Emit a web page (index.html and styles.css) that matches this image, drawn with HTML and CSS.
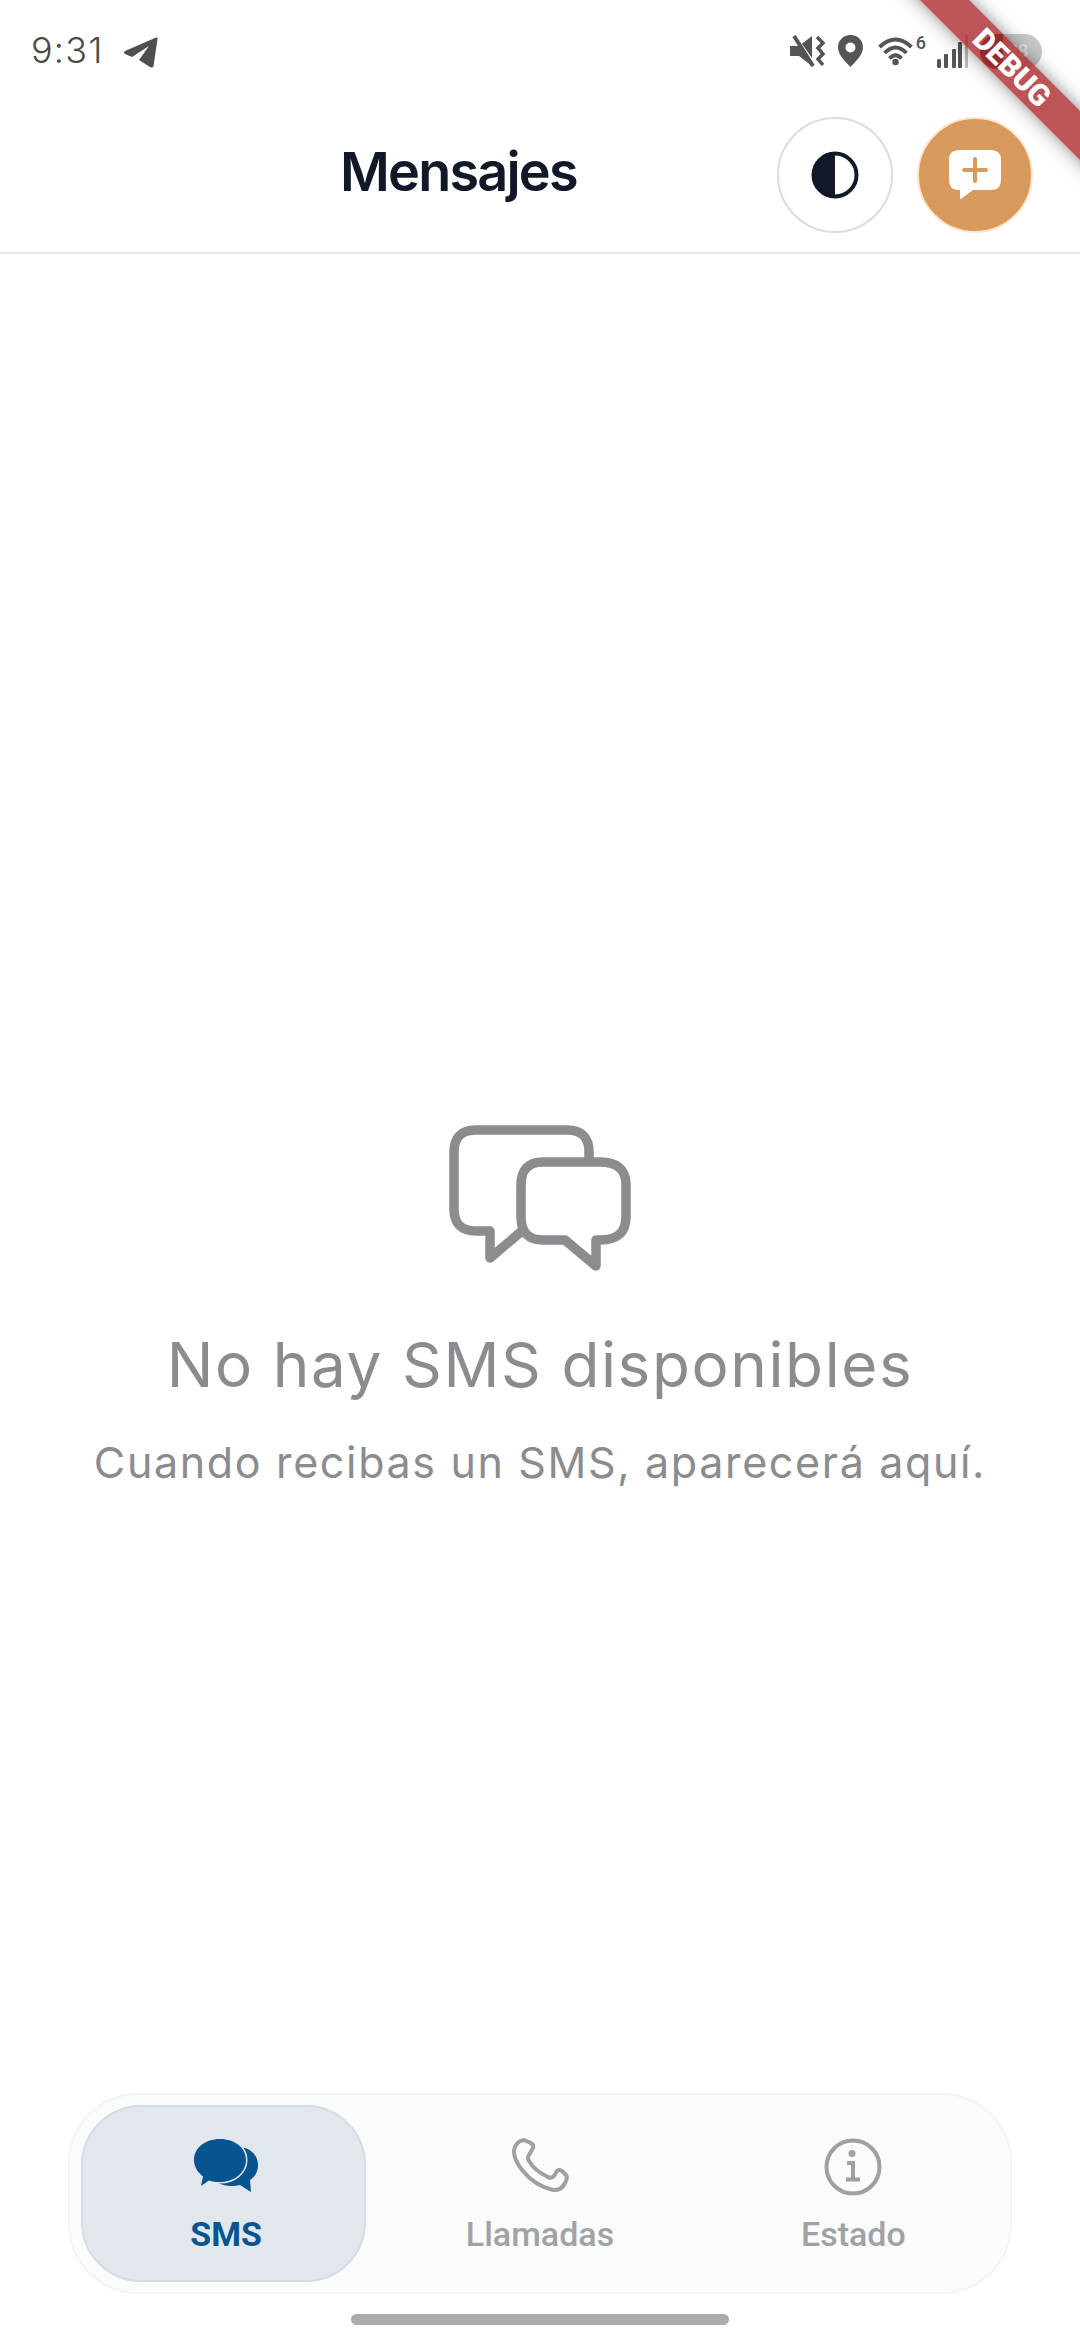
FILE: index.html
```html
<!DOCTYPE html>
<html>
<head>
    <meta charset="UTF-8">
    <title>Mensajes</title>
    <link rel="stylesheet" href="styles.css">
</head>
<body>
    <div class="screen">
        <div class="status-bar">
            <div class="status-left">
                <span class="clock">9:31</span>
                <svg class="tg-icon" width="34" height="31" viewBox="0 0 34 31">
                    <path fill="#4f4f4f" d="M1 14 L32 0.500 Q34 0 33.500 2 L29.500 29 Q29 31.500 26 30 L15 23 L25 9 L8 20 L1 17 Q-1 15.500 1 14Z"/>
                </svg>
            </div>
            <div class="status-right">
                <svg class="mute" width="35" height="32" viewBox="0 0 35 32">
                    <path fill="#555" d="M0 11 H9 L22 1 V31 L9 21 H0Z"/>
                    <path d="M2 -2 L25 31" stroke="#fff" stroke-width="4"/>
                    <path d="M4 1 L23 31" stroke="#555" stroke-width="4"/>
                    <path d="M27 2 L33 8 L28 13 L33 19 L28 24 L33 30" fill="none" stroke="#555" stroke-width="3.500"/>
                </svg>
                <svg class="pin" width="25" height="32" viewBox="0 0 25 32">
                    <path fill="#555" fill-rule="evenodd" d="M12.500 0 C5 0 0 5.500 0 12.500 C0 20 8 27 12.500 32 C17 27 25 20 25 12.500 C25 5.500 20 0 12.500 0Z M12.500 7.500 A5 5 0 1 1 12.400 7.500Z"/>
                </svg>
                <svg class="wifi" width="35" height="32" viewBox="0 0 35 32">
                    <g fill="none" stroke="#555" stroke-width="3.800">
                        <path d="M1.500 12 Q17.500 -3 33.500 12"/>
                        <path d="M6.500 18 Q17.500 7 28.500 18"/>
                        <path d="M11.500 23.500 Q17.500 17 23.500 23.500"/>
                    </g>
                    <circle cx="17.500" cy="27" r="3.200" fill="#555"/>
                </svg>
                <span class="wifi-six">6</span>
                <svg class="signal" width="31" height="34" viewBox="0 0 31 34">
                    <rect x="0" y="25" width="4" height="9" rx="1.500" fill="#555"/>
                    <rect x="7" y="20" width="4" height="14" rx="1" fill="#555"/>
                    <rect x="15" y="15" width="4" height="19" rx="1" fill="#555"/>
                    <rect x="21" y="8" width="4" height="26" rx="1" fill="#555"/>
                    <rect x="28" y="1" width="3" height="33" rx="1" fill="#bbb"/>
                </svg>
                <div class="battery">
                    <div class="battery-level"></div>
                    <span class="battery-text">88</span>
                </div>
            </div>
        </div>

        <header class="app-bar">
            <h1 class="app-title">Mensajes</h1>
            <div class="app-actions">
                <button class="round-btn theme-btn">
                    <svg width="48" height="48" viewBox="0 0 48 48">
                        <circle cx="24" cy="24" r="21.500" fill="none" stroke="#111827" stroke-width="4"/>
                        <path fill="#111827" d="M24 2 A22 22 0 0 0 24 46Z"/>
                    </svg>
                </button>
                <button class="round-btn new-btn">
                    <svg width="52" height="50" viewBox="0 0 52 50">
                        <path fill="#fff" d="M10 0 H42 Q52 0 52 10 V30 Q52 40 42 40 H24 L12 49 Q11 50 11 48 V40 H10 Q0 40 0 30 V10 Q0 0 10 0Z"/>
                        <path d="M26 9 V31 M15 20 H37" stroke="#d89a5c" stroke-width="4" stroke-linecap="round"/>
                    </svg>
                </button>
            </div>
        </header>

        <main class="empty">
            <svg class="empty-icon" width="182" height="146" viewBox="0 0 182 146">
                <g fill="none" stroke="#8a8c90" stroke-width="9.500" stroke-linejoin="round" stroke-linecap="round">
                    <path d="M140 36 V27 Q140 5 118 5 H27 Q5 5 5 27 V84 Q5 106 27 106 H41 V133 L73 106"/>
                    <path d="M94 37 H151 Q177 37 177 60 V92 Q177 115 151 115 H147 V141 L116 115 H94 Q72 115 72 92 V60 Q72 37 94 37Z"/>
                </g>
            </svg>
            <h2 class="empty-title">No hay SMS disponibles</h2>
            <p class="empty-text">Cuando recibas un SMS, aparecerá aquí.</p>
        </main>

        <nav class="tab-bar">
            <div class="tab tab-active">
                <svg width="64" height="58" viewBox="0 -1 64 58">
                    <path fill="#07548f" d="M44 8 C56 8 64 16 64 26 C64 33 61 38 56 41 L57 53 L46 46 C38 48 30 47 24 44Z"/>
                    <path fill="#07548f" stroke="#e1e7ed" stroke-width="3" paint-order="stroke" d="M26 0 C41 0 52 9 52 21 C52 33 41 43 26 43 C22 43 18 42.500 15 41.500 L7 47 L9 37.500 C3 33 0 27 0 21 C0 9 11 0 26 0Z"/>
                </svg>
                <span class="tab-label">SMS</span>
            </div>
            <div class="tab">
                <svg width="58" height="58" viewBox="0 0 58 58">
                    <path fill="none" stroke="#9ea0a3" stroke-width="4" stroke-linejoin="round" d="M13 2 L20 5 Q23 7 22 10 L18 17 Q16 20 18 23 Q24 33 37 39 Q40 41 43 38 L46 33 Q48 31 51 33 L55 37 Q57 40 54 45 Q50 53 42 52 Q24 48 11 32 Q2 20 3 12 Q5 3 13 2Z"/>
                </svg>
                <span class="tab-label">Llamadas</span>
            </div>
            <div class="tab">
                <svg width="58" height="58" viewBox="0 0 58 58">
                    <circle cx="29" cy="29" r="26.500" fill="none" stroke="#9ea0a3" stroke-width="4"/>
                    <circle cx="28" cy="15.500" r="3.500" fill="#9ea0a3"/>
                    <path d="M23 25 H29 V41 M22 41.500 H36" fill="none" stroke="#9ea0a3" stroke-width="4"/>
                </svg>
                <span class="tab-label">Estado</span>
            </div>
        </nav>
        <div class="home-pill"></div>

        <div class="debug-banner"></div>
        <span class="debug-text">DEBUG</span>
    </div>
</body>
</html>
```

FILE: styles.css
```css
* {
    box-sizing: border-box;
}
html, body {
    margin: 0;
    padding: 0;
    background: #fff;
}
.screen {
    position: relative;
    width: 1080px;
    height: 2340px;
    overflow: hidden;
    display: flex;
    flex-direction: column;
    font-family: 'Inter', sans-serif;
}
.status-bar {
    height: 100px;
    padding: 29px 38px 0 31px;
    display: flex;
    justify-content: space-between;
    align-items: flex-start;
}
.status-left {
    display: flex;
    align-items: center;
    gap: 20px;
}
.clock {
    font-size: 36px;
    font-weight: 300;
    line-height: 42px;
    letter-spacing: 1.200px;
    color: #4a4a4a;
}
.tg-icon {
    margin-top: 4px;
}
.status-right {
    display: flex;
    align-items: center;
    height: 44px;
}
.pin {
    margin-left: 13px;
}
.wifi {
    margin-left: 15px;
}
.wifi-six {
    width: 13px;
    margin-bottom: 17px;
    font-family: 'Roboto', sans-serif;
    font-size: 18px;
    font-weight: 500;
    line-height: 18px;
    text-align: right;
    color: #555;
}
.signal {
    margin-left: 11px;
}
.battery {
    width: 62px;
    height: 35px;
    margin-left: 12px;
    border-radius: 18px;
    background: #c9c9c9;
    overflow: hidden;
    display: flex;
    align-items: center;
}
.battery-level {
    width: 23px;
    height: 100%;
    background: #333;
}
.battery-text {
    margin-left: 4px;
    font-family: 'Roboto', sans-serif;
    font-size: 19px;
    font-weight: 500;
    line-height: 20px;
    color: #eee;
}
.app-bar {
    height: 154px;
    padding: 0 47px 0 340px;
    border-bottom: 2px solid #e5e7eb;
    display: flex;
    align-items: center;
    justify-content: space-between;
}
.app-title {
    margin: 0 0 8px;
    font-size: 54px;
    font-weight: 600;
    letter-spacing: -1.800px;
    line-height: 64px;
    color: #111827;
}
.app-actions {
    display: flex;
    gap: 24px;
    margin-top: -3px;
}
.round-btn {
    width: 116px;
    height: 116px;
    padding: 0;
    border-radius: 50%;
    display: flex;
    align-items: center;
    justify-content: center;
}
.theme-btn {
    background: #fff;
    border: 2px solid #dcdcdc;
}
.new-btn {
    background: #d89a5c;
    border: 2px solid #fbe6cf;
}
.empty {
    flex: 1;
    display: flex;
    flex-direction: column;
    align-items: center;
    padding-top: 871px;
    color: #8a8c90;
}
.empty-icon {
    display: block;
}
.empty-title {
    margin: 56px 0 0;
    font-size: 62px;
    font-weight: 400;
    line-height: 76px;
    letter-spacing: 1.600px;
}
.empty-text {
    margin: 33px 0 0;
    font-size: 43px;
    font-weight: 400;
    line-height: 52px;
    letter-spacing: 1.650px;
}
.tab-bar {
    height: 201px;
    margin: 0 68px;
    display: grid;
    grid-template-columns: 1fr 1fr 1fr;
    background: #fafbfb;
    border: 2px solid #f3f4f6;
    border-radius: 70px;
}
.tab {
    display: flex;
    flex-direction: column;
    align-items: center;
    padding-top: 43px;
    gap: 18px;
}
.tab-active {
    margin: 10px 17px 10px 11px;
    padding: 31px 0 0 5px;
    background: #e1e7ed;
    border: 2px solid #d3dde4;
    border-radius: 60px;
}
.tab-label {
    font-family: 'Roboto', sans-serif;
    font-size: 34px;
    font-weight: 500;
    line-height: 40px;
    color: #a0a2a5;
}
.tab-active .tab-label {
    color: #07548f;
    font-weight: 700;
}
.home-pill {
    width: 378px;
    height: 11px;
    margin: 20px auto 15px;
    border-radius: 6px;
    background: #acacac;
}
.debug-banner {
    position: absolute;
    top: 50px;
    left: 862px;
    width: 300px;
    height: 35px;
    transform: rotate(45deg);
    background: rgba(170, 40, 45, 0.8);
    box-shadow: 0 0 18px rgba(0, 0, 0, 0.45);
}
.debug-text {
    position: absolute;
    top: 50px;
    left: 962px;
    width: 100px;
    height: 35px;
    transform: rotate(45deg);
    font-family: 'Roboto', sans-serif;
    font-size: 30px;
    font-weight: 900;
    line-height: 35px;
    text-align: center;
    color: #fff;
}
```
